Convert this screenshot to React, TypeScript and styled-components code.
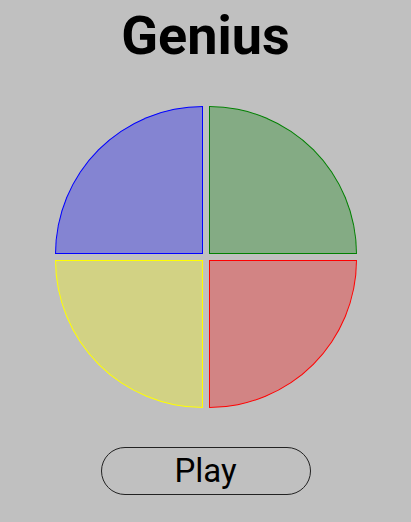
import React from "react";
import styled, { createGlobalStyle } from "styled-components";

const Global = createGlobalStyle`
  html, body {
    margin: 0;
    padding: 0;
    background: #c0c0c0;
    font-family: Roboto, "Liberation Sans", sans-serif;
  }
`;

const Page = styled.div`
  display: flex;
  flex-direction: column;
  align-items: center;
  width: 411px;
  height: 522px;
  background: #c0c0c0;
`;

const Title = styled.h1`
  margin: 4px 0 0;
  font-size: 54px;
  font-weight: 700;
  line-height: 63px;
  color: #000;
`;

const Board = styled.div`
  margin-top: 39px;
  display: grid;
  grid-template-columns: 148px 148px;
  grid-template-rows: 148px 148px;
  gap: 6px;
`;

type Corner = "tl" | "tr" | "bl" | "br";

const radius = (c: Corner) =>
  c === "tl"
    ? "148px 0 0 0"
    : c === "tr"
    ? "0 148px 0 0"
    : c === "bl"
    ? "0 0 0 148px"
    : "0 0 148px 0";

const Pad = styled.button<{ $line: string; $fill: string; $corner: Corner }>`
  box-sizing: border-box;
  width: 148px;
  height: 148px;
  padding: 0;
  margin: 0;
  border: 1px solid ${(p) => p.$line};
  background: ${(p) => p.$fill};
  border-radius: ${(p) => radius(p.$corner)};
  cursor: pointer;
`;

const PlayButton = styled.button`
  box-sizing: border-box;
  margin-top: 39px;
  width: 210px;
  height: 48px;
  border: 1px solid #222;
  border-radius: 24px;
  background: transparent;
  font-family: Roboto, "Liberation Sans", sans-serif;
  font-size: 33px;
  color: #000;
  padding: 0;
  line-height: 46px;
  cursor: pointer;
`;

export default function App() {
  return (
    <Page>
      <Global />
      <Title>Genius</Title>
      <Board>
        <Pad $corner="tl" $line="#0000ff" $fill="#8484d2" />
        <Pad $corner="tr" $line="#008000" $fill="#84ab84" />
        <Pad $corner="bl" $line="#ffff00" $fill="#d2d284" />
        <Pad $corner="br" $line="#ff0000" $fill="#d28484" />
      </Board>
      <PlayButton>Play</PlayButton>
    </Page>
  );
}
